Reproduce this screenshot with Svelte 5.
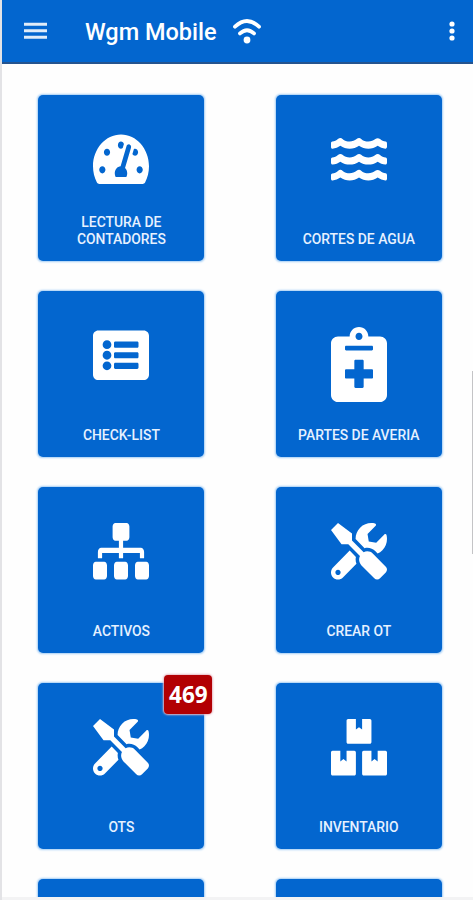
<!--
  @component HomeScreen
  @description Main menu of Wgm Mobile: app bar plus a two-column grid of
    module tiles. A tile can carry a badge with its pending count.
-->
<script>
  // Every glyph is stretched to the tile's icon box, so the viewBox differs
  // from one to the next but the drawn width does not.
  const icons = {
    gauge: {
      viewBox: '0 0 576 512',
      paths: [
        'M288 32C128.94 32 0 160.94 0 320c0 52.8 14.25 102.26 39.06 144.8 5.61 9.62 16.3 15.2 27.44 15.2h443c11.14 0 21.83-5.58 27.44-15.2C561.75 422.26 576 372.8 576 320c0-159.06-128.94-288-288-288zm0 64c14.71 0 26.58 10.13 30.32 23.65-1.11 2.26-2.64 4.23-3.45 6.67l-9.22 27.67c-5.13 3.49-10.97 6.01-17.64 6.01-17.67 0-32-14.33-32-32S270.33 96 288 96zM96 384c-17.67 0-32-14.33-32-32s14.33-32 32-32 32 14.33 32 32-14.33 32-32 32zm48-160c-17.67 0-32-14.33-32-32s14.33-32 32-32 32 14.33 32 32-14.33 32-32 32zm246.77-72.41l-61.33 184C343.13 347.33 352 364.54 352 384c0 11.72-3.38 22.55-8.88 32H232.88c-5.5-9.45-8.88-20.28-8.88-32 0-33.94 26.5-61.43 59.9-63.59l61.34-184.01c4.17-12.56 17.73-19.45 30.36-15.17 12.57 4.19 19.35 17.79 15.17 30.36zm14.66 57.2l15.52-46.55c3.47-1.29 7.13-2.23 11.05-2.23 17.67 0 32 14.33 32 32s-14.33 32-32 32c-11.38-.01-20.89-6.28-26.57-15.22zM480 384c-17.67 0-32-14.33-32-32s14.33-32 32-32 32 14.33 32 32-14.33 32-32 32z',
      ],
    },
    water: {
      viewBox: '0 0 576 512',
      paths: [0, 144, 288].map(
        (dy) =>
          `M562.1 ${383.9 - dy}c-21.5-2.4-42.1-10.5-57.9-22.9-14.1-11.1-34.2-11.3-48.2 0-37.9 30.4-107.2 30.4-145.7-1.5-13.5-11.2-33-9.1-46.7 1.8-38 30.1-106.9 30-145.2-1.7-13.5-11.2-33.3-8.9-47.1 2-15.5 12.2-36 20.1-57.7 22.4-7.9.8-13.6 7.8-13.6 15.7v32.2c0 9.1 7.6 16.8 16.7 16 28.8-2.5 56.1-11.4 79.4-25.9 56.5 34.6 137 34.1 192 0 56.5 34.6 137 34.1 192 0 23.3 14.2 50.9 23.3 79.1 25.8 9.1.8 16.7-6.9 16.7-16v-31.6c.1-8-5.7-15.4-13.8-16.3z`
      ),
    },
    list: {
      viewBox: '0 0 512 512',
      paths: [
        'M464 480H48c-26.51 0-48-21.49-48-48V80c0-26.51 21.49-48 48-48h416c26.51 0 48 21.49 48 48v352c0 26.51-21.49 48-48 48zM128 120c-22.09 0-40 17.91-40 40s17.91 40 40 40 40-17.91 40-40-17.91-40-40-40zm0 96c-22.09 0-40 17.91-40 40s17.91 40 40 40 40-17.91 40-40-17.91-40-40-40zm0 96c-22.09 0-40 17.91-40 40s17.91 40 40 40 40-17.91 40-40-17.91-40-40-40zm288-136v-32c0-6.63-5.37-12-12-12H204c-6.63 0-12 5.37-12 12v32c0 6.63 5.37 12 12 12h200c6.63 0 12-5.37 12-12zm0 96v-32c0-6.63-5.37-12-12-12H204c-6.63 0-12 5.37-12 12v32c0 6.63 5.37 12 12 12h200c6.63 0 12-5.37 12-12zm0 96v-32c0-6.63-5.37-12-12-12H204c-6.63 0-12 5.37-12 12v32c0 6.63 5.37 12 12 12h200c6.63 0 12-5.37 12-12z',
      ],
    },
    medical: {
      viewBox: '0 0 384 512',
      tall: true,
      paths: [
        'M336 64h-80c0-35.3-28.7-64-64-64s-64 28.7-64 64H48C21.5 64 0 85.5 0 112v352c0 26.5 21.5 48 48 48h288c26.5 0 48-21.5 48-48V112c0-26.5-21.5-48-48-48zM192 40c13.3 0 24 10.7 24 24s-10.7 24-24 24-24-10.7-24-24 10.7-24 24-24zm96 304c0 4.4-3.6 8-8 8h-56v56c0 4.4-3.6 8-8 8h-48c-4.4 0-8-3.6-8-8v-56h-56c-4.4 0-8-3.6-8-8v-48c0-4.4 3.6-8 8-8h56v-56c0-4.4 3.6-8 8-8h48c4.4 0 8 3.6 8 8v56h56c4.4 0 8 3.6 8 8v48zm0-192c0 4.4-3.6 8-8 8H104c-4.4 0-8-3.6-8-8v-16c0-4.4 3.6-8 8-8h176c4.4 0 8 3.6 8 8v16z',
      ],
    },
    sitemap: {
      viewBox: '0 0 640 512',
      paths: [
        'M128 352H32c-17.67 0-32 14.33-32 32v96c0 17.67 14.33 32 32 32h96c17.67 0 32-14.33 32-32v-96c0-17.67-14.33-32-32-32zm-24-80h192v48h48v-48h192v48h48v-57.59c0-21.17-17.23-38.41-38.41-38.41H344v-64h40c17.67 0 32-14.33 32-32V32c0-17.67-14.33-32-32-32H256c-17.67 0-32 14.33-32 32v96c0 17.67 14.33 32 32 32h40v64H94.41C73.23 224 56 241.23 56 262.41V320h48v-48zm264 80h-96c-17.67 0-32 14.33-32 32v96c0 17.67 14.33 32 32 32h96c17.67 0 32-14.33 32-32v-96c0-17.67-14.33-32-32-32zm240 0h-96c-17.67 0-32 14.33-32 32v96c0 17.67 14.33 32 32 32h96c17.67 0 32-14.33 32-32v-96c0-17.67-14.33-32-32-32z',
      ],
    },
    tools: {
      viewBox: '0 0 512 512',
      paths: [
        'M501.1 395.7L384 278.6c-23.1-23.1-57.6-27.6-85.4-13.9L192 158.1V96L64 0 0 64l96 128h62.1l106.6 106.6c-13.6 27.8-9.2 62.3 13.9 85.4l117.1 117.1c14.6 14.6 38.2 14.6 52.7 0l52.7-52.7c14.5-14.6 14.5-38.2 0-52.7zM331.7 225c28.3 0 54.9 11 74.9 31l19.4 19.4c15.8-6.9 30.8-16.5 43.8-29.5 37.1-37.1 49.7-89.3 37.9-136.7-2.2-9-13.5-12.1-20.1-5.5l-74.4 74.4-67.9-11.3L334 98.9l74.4-74.4c6.6-6.6 3.4-17.9-5.7-20.2-47.4-11.7-99.6.9-136.6 37.9-28.5 28.5-41.9 66.1-41.2 103.6l82.1 82.1c8.1-1.9 16.5-2.9 24.7-2.9zm-103.9 82l-56.7-56.7L18.7 402.8c-25 25-25 65.5 0 90.5s65.5 25 90.5 0l123.6-123.6c-7.6-19.9-9.9-41.6-5-62.7zM64 472c-13.2 0-24-10.8-24-24 0-13.3 10.7-24 24-24s24 10.7 24 24c0 13.2-10.7 24-24 24z',
      ],
    },
    boxes: {
      viewBox: '0 0 576 512',
      paths: [
        'M560 288h-80v96l-32-21.3-32 21.3v-96h-80c-8.8 0-16 7.2-16 16v192c0 8.8 7.2 16 16 16h224c8.8 0 16-7.2 16-16V304c0-8.8-7.2-16-16-16zm-384-64h224c8.8 0 16-7.2 16-16V16c0-8.8-7.2-16-16-16h-80v96l-32-21.3L256 96V0h-80c-8.8 0-16 7.2-16 16v192c0 8.8 7.2 16 16 16zm64 64h-80v96l-32-21.3L96 384v-96H16c-8.8 0-16 7.2-16 16v192c0 8.8 7.2 16 16 16h224c8.8 0 16-7.2 16-16V304c0-8.8-7.2-16-16-16z',
      ],
    },
  };

  const tiles = [
    { id: 'lectura', label: 'LECTURA DE CONTADORES', icon: icons.gauge },
    { id: 'cortes', label: 'CORTES DE AGUA', icon: icons.water },
    { id: 'checklist', label: 'CHECK-LIST', icon: icons.list },
    { id: 'partes', label: 'PARTES DE AVERIA', icon: icons.medical },
    { id: 'activos', label: 'ACTIVOS', icon: icons.sitemap },
    { id: 'crear-ot', label: 'CREAR OT', icon: icons.tools },
    { id: 'ots', label: 'OTS', icon: icons.tools, badge: 469 },
    { id: 'inventario', label: 'INVENTARIO', icon: icons.boxes },
    // Last row is below the fold.
    { id: 'next-left' },
    { id: 'next-right' },
  ];
</script>

<div class="screen">
  <header class="app-bar">
    <button type="button" class="bar-btn menu" aria-label="Menú">
      <svg width="23" height="18" viewBox="0 0 23 18">
        <path d="M0 2.2h23M0 8.8h23M0 15.3h23" stroke="currentColor" stroke-width="3" />
      </svg>
    </button>
    <h1 class="title">Wgm Mobile</h1>
    <svg class="wifi" width="30" height="28" viewBox="0 0 30 28" aria-hidden="true">
      <g fill="none" stroke="currentColor" stroke-width="3.8" stroke-linecap="round">
        <path d="M3 9.7Q15-1.8 27 9.7" />
        <path d="M8 16.4Q15 10 22 16.4" />
      </g>
      <circle cx="15" cy="23" r="3.4" fill="currentColor" />
    </svg>
    <button type="button" class="bar-btn more" aria-label="Más opciones">
      <svg width="6" height="20" viewBox="0 0 6 20" fill="currentColor">
        <circle cx="3" cy="3" r="2.6" />
        <circle cx="3" cy="10" r="2.6" />
        <circle cx="3" cy="17" r="2.6" />
      </svg>
    </button>
  </header>

  <main class="grid">
    {#each tiles as tile (tile.id)}
      <button type="button" class="tile" aria-label={tile.label}>
        {#if tile.icon}
          <svg
            class="icon"
            class:tall={tile.icon.tall}
            viewBox={tile.icon.viewBox}
            preserveAspectRatio="none"
            aria-hidden="true"
          >
            {#each tile.icon.paths as d}
              <path {d} />
            {/each}
          </svg>
          <span class="label">{tile.label}</span>
        {/if}
        {#if tile.badge}
          <span class="badge">{tile.badge}</span>
        {/if}
      </button>
    {/each}
  </main>

  <div class="bottom-edge"></div>
  <div class="scroll-thumb"></div>
</div>

<style>
  :global(body) {
    background: #fff;
  }

  .screen {
    position: relative;
    display: flex;
    flex-direction: column;
    box-sizing: border-box;
    width: 473px;
    height: 900px;
    overflow: hidden;
    border-left: 2px solid #e3e3e6;
    background: #fefefe;
    font-family: Roboto, 'Liberation Sans', sans-serif;
  }

  button {
    margin: 0;
    padding: 0;
    border: none;
    font: inherit;
    color: inherit;
    cursor: pointer;
  }

  .app-bar {
    display: flex;
    align-items: center;
    flex: none;
    box-sizing: border-box;
    height: 64px;
    padding: 0 18px 0 22px;
    border-bottom: 2px solid #25548f;
    background: #0366cf;
    color: #fff;
  }

  .bar-btn {
    display: flex;
    background: none;
  }

  .menu {
    opacity: 0.88;
  }

  .title {
    margin: 0 0 0 38px;
    padding-top: 2px;
    font-size: 23.5px;
    font-weight: 500;
    line-height: 28px;
    white-space: nowrap;
  }

  .wifi {
    margin-left: 15px;
  }

  .more {
    margin-left: auto;
  }

  .grid {
    display: grid;
    grid-template-columns: 166px 166px;
    grid-auto-rows: 165.7px;
    gap: 30.4px 71.4px;
    flex: 1;
    min-height: 0;
    overflow: hidden;
    padding: 31px 0 0 36.4px;
  }

  .tile {
    position: relative;
    display: flex;
    flex-direction: column;
    align-items: center;
    justify-content: space-between;
    padding: 36px 20px 13.5px;
    border-radius: 5px;
    background: #0366cf;
    box-shadow: 0 0 2px 0.5px #a3cdf5;
    color: #fff;
  }

  .icon {
    width: 56px;
    height: 56.5px;
    fill: #fff;
  }

  .icon.tall {
    height: 75px;
  }

  .label {
    font-size: 13.9px;
    font-weight: 500;
    line-height: 16.5px;
    text-align: center;
    color: #e6f1ff;
  }

  .badge {
    position: absolute;
    top: -8px;
    right: -8px;
    box-sizing: border-box;
    width: 48px;
    height: 39px;
    border-radius: 4px;
    background: #b20003;
    box-shadow: 0 0 2px 1px #e8b9c4;
    font-family: 'Noto Sans', 'Open Sans', sans-serif;
    font-size: 22.5px;
    font-weight: 700;
    line-height: 39px;
    text-align: center;
  }

  .bottom-edge {
    flex: none;
    height: 3px;
    background: #f3f3f4;
  }

  .scroll-thumb {
    position: absolute;
    top: 371px;
    right: 0;
    width: 1.5px;
    height: 183px;
    background: #c4c4c6;
  }
</style>
